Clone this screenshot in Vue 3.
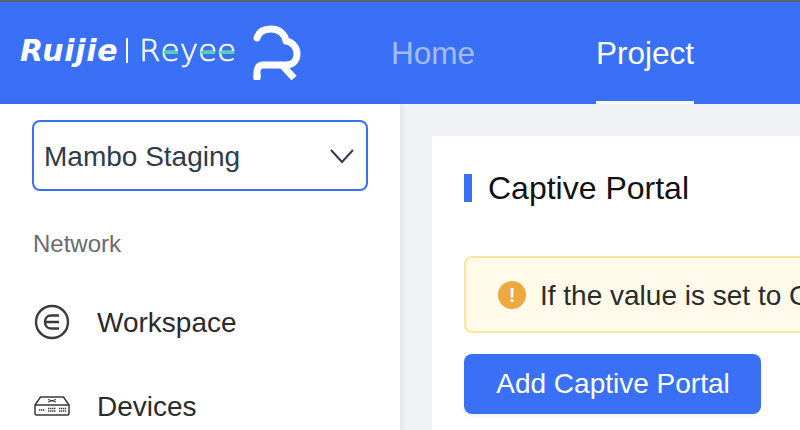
<script setup>
const navItems = [
  { label: 'Home', active: false },
  { label: 'Project', active: true },
]
</script>

<template>
  <div class="page">
    <header class="top">
      <div class="logo">
        <span class="ruijie">Ruijie</span>
        <span class="sep"></span>
        <span class="reyee">R<span class="e">e</span>y<span class="e">e</span><span class="e">e</span></span>
        <svg class="mark" width="52" height="56" viewBox="250 26 52 56" fill="none">
          <path d="M256 40 C258 33 264 31 270 31 C278 31 284 36 285 43 C292 44 296 50 296 56 C296 63 291 67 285 67 L262 67 C258 67 256 70 256 74 L256 80" stroke="#fff" stroke-width="7" stroke-linecap="round" stroke-linejoin="round"/>
          <path d="M256 76 V80 M281 67 L293 80" stroke="#fff" stroke-width="7"/>
        </svg>
      </div>
      <nav class="nav">
        <a v-for="item in navItems" :key="item.label" class="nav-item" :class="{ active: item.active }">{{ item.label }}</a>
      </nav>
    </header>
    <div class="body">
      <aside class="side">
        <div class="select">
          <span class="select-text">Mambo Staging</span>
          <svg width="26" height="16" viewBox="0 0 26 16" fill="none">
            <path d="M2 2 L13 14 L24 2" stroke="#303a4b" stroke-width="2"/>
          </svg>
        </div>
        <div class="group">Network</div>
        <div class="menu-item">
          <svg class="ico" width="36" height="36" viewBox="0 0 36 36" fill="none" stroke="#3a3a3a" stroke-width="2.4">
            <circle cx="18" cy="18" r="16"/>
            <path d="M25 11.5 H17 C13 11.5 11 14.5 11 18 C11 21.5 13 24.5 17 24.5 H25 M12 18 H25"/>
          </svg>
          <span class="menu-label">Workspace</span>
        </div>
        <div class="menu-item">
          <svg class="ico" width="36" height="20" viewBox="0 0 36 20" fill="none" stroke="#3a3a3a">
            <path d="M1 9 L6.5 1 H29.5 L35 9 V17.5 Q35 19 33.5 19 H2.5 Q1 19 1 17.5 Z M1 9 H35" stroke-width="1.5" stroke-linejoin="round"/>
            <path d="M14 3.5 L22 6 M14 6 L22 3.5" stroke-width="1"/>
            <path d="M5 14 H11 M14 12.5 H22 M14 15 H22 M25 12.5 H32 M25 15 H32" stroke-width="1.6" stroke-dasharray="1.4 .6"/>
          </svg>
          <span class="menu-label">Devices</span>
        </div>
      </aside>
      <main class="main">
        <section class="card">
          <h2 class="title">Captive Portal</h2>
          <div class="alert">
            <span class="alert-ico">!</span>
            <span class="alert-text">If the value is set to Captive Portal, clients will be redirected to the login page.</span>
          </div>
          <button class="btn">Add Captive Portal</button>
        </section>
      </main>
    </div>
  </div>
</template>

<style>
html, body { margin: 0; overflow: hidden; background: #fff; }
</style>

<style scoped>
.page {
  width: 800px;
  height: 430px;
  overflow: hidden;
  font-family: "Liberation Sans", Arial, sans-serif;
  display: flex;
  flex-direction: column;
}
.top {
  height: 104px;
  box-sizing: border-box;
  flex: none;
  background: #3a70f6;
  border-top: 2px solid #5d6268;
  display: flex;
  align-items: stretch;
}
.logo {
  width: 391px;
  flex: none;
  padding-left: 20px;
  box-sizing: border-box;
  display: flex;
  align-items: center;
  color: #fff;
}
.ruijie {
  font: italic 700 30px "DejaVu Sans", sans-serif;
  letter-spacing: .7px;
  width: 106px;
  margin-top: -6px;
  white-space: nowrap;
}
.sep {
  width: 2px;
  height: 25px;
  background: #fff;
  margin-top: -5px;
  margin-right: 11px;
}
.reyee {
  font: 200 31px "DejaVu Sans", sans-serif;
  -webkit-text-stroke: .6px #fff;
  width: 99px;
  margin-top: -6px;
  white-space: nowrap;
}
.reyee .e {
  display: inline-block;
  position: relative;
}
.reyee .e::after {
  content: "";
  position: absolute;
  left: 3px;
  right: 2px;
  top: 19px;
  height: 3px;
  background: #4fd6a4;
}
.mark { margin-left: 13px; margin-top: -2px; flex: none; }
.nav { display: flex; gap: 121px; }
.nav-item {
  font-size: 31.5px;
  color: rgba(255, 255, 255, .55);
  display: flex;
  align-items: center;
  border-bottom: 3px solid transparent;
  box-sizing: border-box;
  padding-top: 4px;
  margin-bottom: 0;
}
.nav-item.active {
  color: #fff;
  border-bottom-color: #fff;
}
.body {
  flex: 1;
  display: flex;
  min-height: 0;
}
.side {
  width: 400px;
  flex: none;
  padding: 16px 32px 0;
  box-sizing: border-box;
  background: #fff;
  box-shadow: 2px 0 6px rgba(0, 20, 60, .08);
  position: relative;
}
.select {
  height: 71px;
  box-sizing: border-box;
  border: 2px solid #3a70f6;
  border-radius: 8px;
  display: flex;
  align-items: center;
  justify-content: space-between;
  padding: 0 11px 0 10px;
  font-size: 28px;
  color: #303a4b;
}
.select-text { padding-top: 3px; }
.group {
  margin-top: 39px;
  margin-left: 1px;
  font-size: 24px;
  line-height: 28px;
  color: #6b6b6b;
}
.menu-item {
  display: flex;
  align-items: center;
  height: 36px;
  margin-top: 46px;
  font-size: 28px;
  color: #2b2b2b;
  gap: 26px;
}
.menu-item + .menu-item { margin-top: 48px; }
.menu-label { padding-top: 2px; }
.ico { width: 38px; flex: none; margin-left: 1px; }
.main {
  flex: 1;
  background: #f0f2f6;
  padding: 32px 0 0 32px;
  min-width: 0;
}
.card {
  background: #fff;
  height: 400px;
  padding: 38px 32px;
  box-sizing: border-box;
}
.title {
  margin: 0;
  font-size: 32px;
  font-weight: 400;
  line-height: 32px;
  color: #111;
  border-left: 8px solid #3a70f6;
  padding-left: 16px;
  height: 28px;
  display: flex;
  align-items: center;
  white-space: nowrap;
}
.alert {
  margin-top: 54px;
  height: 77px;
  width: 600px;
  box-sizing: border-box;
  background: #fffaea;
  border: 2px solid #fbe49c;
  border-radius: 8px;
  display: flex;
  align-items: center;
  padding-left: 32px;
  gap: 15px;
  white-space: nowrap;
  overflow: hidden;
}
.alert-ico {
  width: 28px;
  height: 28px;
  flex: none;
  border-radius: 50%;
  background: #eea93e;
  color: #fff;
  font-size: 20px;
  font-weight: 700;
  text-align: center;
  line-height: 28px;
}
.alert-text {
  font-size: 28px;
  color: #2b2b2b;
  padding-top: 3px;
  margin-left: -1px;
}
.btn {
  display: block;
  margin-top: 21px;
  width: 297px;
  height: 60px;
  border: 0;
  border-radius: 8px;
  background: #3a70f6;
  color: #fff;
  font: 400 28px "Liberation Sans", sans-serif;
  box-shadow: 0 3px 4px rgba(0, 0, 0, .05);
  padding: 0 0 0 1px;
}
</style>
